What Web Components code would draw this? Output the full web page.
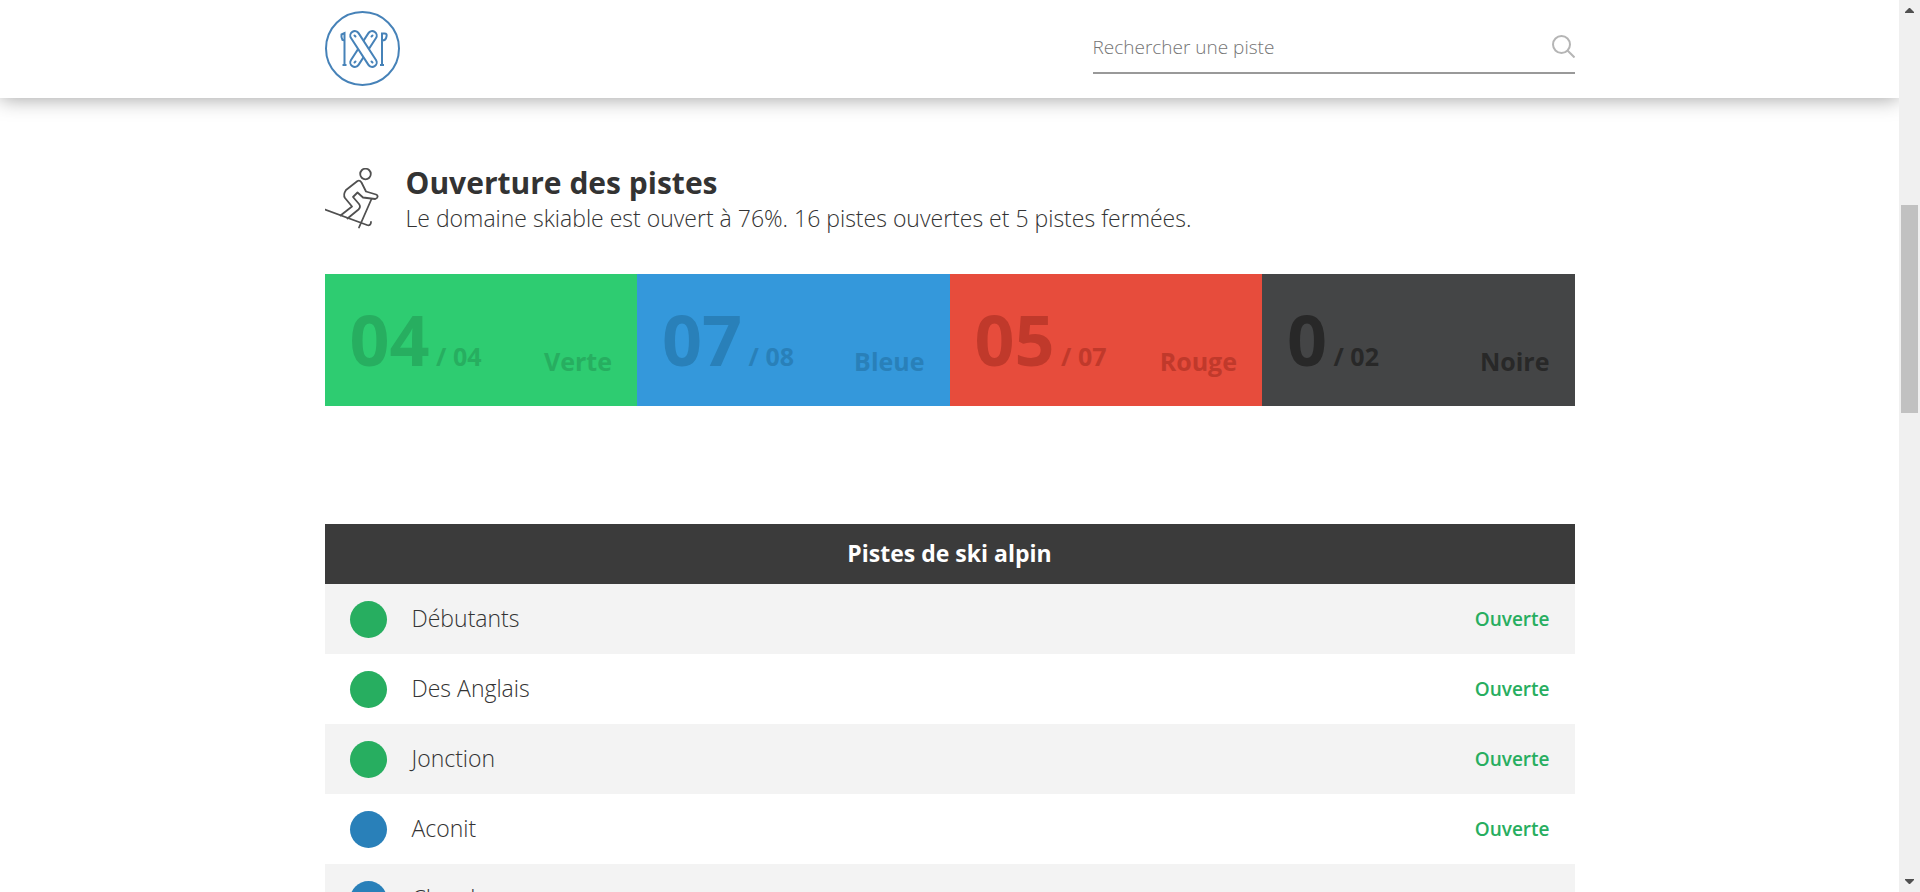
<!DOCTYPE html>
<html lang="fr">
<head>
<meta charset="utf-8">
<title>Ouverture des pistes</title>
<style>
  html, body { margin: 0; height: 100%; overflow: hidden; background: #fff; }
  body { font-family: "Open Sans", "Noto Sans", sans-serif; color: #333; }
</style>
</head>
<body>
<ski-page>
  <site-header slot="header"></site-header>
  <section-title heading="Ouverture des pistes">Le domaine skiable est ouvert à 76%. 16 pistes ouvertes et 5 pistes fermées.</section-title>
  <piste-summary>
    <summary-card color="verte" open="04" total="04">Verte</summary-card>
    <summary-card color="bleue" open="07" total="08">Bleue</summary-card>
    <summary-card color="rouge" open="05" total="07">Rouge</summary-card>
    <summary-card color="noire" open="0" total="02">Noire</summary-card>
  </piste-summary>
  <piste-table heading="Pistes de ski alpin"></piste-table>
</ski-page>

<script>
const define = (name, html, setup) => {
  const template = document.createElement('template');
  template.innerHTML = html;
  customElements.define(name, class extends HTMLElement {
    constructor() {
      super();
      this.attachShadow({ mode: 'open' }).append(template.content.cloneNode(true));
    }
    connectedCallback() { if (setup) setup(this, this.shadowRoot); }
  });
};

define('ski-page', `
  <style>
    :host { display: grid; grid-template-columns: minmax(0, 1fr) 21px; height: 100vh; }
    .view { overflow: hidden; }
    main { box-sizing: border-box; max-width: 1250px; margin: 0 auto; padding-top: 67px; }
  </style>
  <div class="view">
    <slot name="header"></slot>
    <main><slot></slot></main>
  </div>
  <scroll-rail></scroll-rail>`);

define('scroll-rail', `
  <style>
    :host { display: grid; grid-template-rows: 21px 184fr 208fr 458fr 21px; justify-items: center; background: #f0f0f0; }
    svg { display: block; width: 9px; height: 5px; place-self: center; }
    .thumb { grid-row: 3; width: 17px; background: #c1c1c1; }
    .down { grid-row: 5; }
  </style>
  <svg viewBox="0 0 9 5" fill="#505050"><path d="M0 5V4L4 0h1l4 4v1z"/></svg>
  <div class="thumb"></div>
  <svg class="down" viewBox="0 0 9 5" fill="#505050"><path d="M0 0v1l4 4h1l4-4V0z"/></svg>`);

define('site-header', `
  <style>
    :host { display: block; background: #fff; box-shadow: 0 0 20px rgba(0, 0, 0, .4); }
    .bar { box-sizing: border-box; max-width: 1250px; height: 98px; padding-bottom: 2px; margin: 0 auto; display: flex; justify-content: space-between; align-items: center; }
    a, svg { display: block; }
    form { display: flex; align-items: center; width: 482px; height: 52px; border-bottom: 2px solid #999; box-sizing: border-box; }
    input { flex: 1; min-width: 0; border: 0; padding: 0; outline: 0; background: none; font: 300 19px/28px "Open Sans", sans-serif; color: #333; }
    input::placeholder { color: #757575; opacity: 1; }
    button { border: 0; padding: 0 0 2px; background: none; }
  </style>
  <header class="bar">
    <a href="#" aria-label="Accueil">
      <svg width="75" height="75" viewBox="0 0 75 75" fill="none" stroke="#4682b8" stroke-width="2">
        <circle cx="37.500" cy="37.500" r="36.500"/>
        <rect x="-4.500" y="-20.500" width="9" height="41" rx="4.500" transform="translate(38.500 38) rotate(33)"/>
        <rect x="-4.500" y="-20.500" width="9" height="41" rx="4.500" fill="#fff" transform="translate(38.500 38) rotate(-33)"/>
        <path d="M29.500 24.500l1 1M46.500 50.500l1 1M46.500 25.500l1-1M29.500 51.500l1-1" stroke-linecap="round"/>
        <path d="M19.500 30v25M17.500 54h4M16.500 23.500l3-1.500v7.500l-2-.5c-1-2-1.500-3.500-1-5.500z"/>
        <path d="M57 22v33M55 54h4M57 22.500h2.500c2 0 2.500 1 2 3-.5 3-1.500 4-4.500 4z"/>
      </svg>
    </a>
    <form role="search">
      <input type="search" aria-label="Rechercher une piste" placeholder="Rechercher une piste">
      <button type="button" aria-label="Rechercher">
        <svg width="23" height="23" viewBox="0 0 23 23" fill="none" stroke="#b5b5b5" stroke-width="2"><circle cx="9.500" cy="9.500" r="8.500"/><path d="M15.500 15.500l7 7"/></svg>
      </button>
    </form>
  </header>`);

define('section-title', `
  <style>
    :host { display: flex; align-items: flex-start; gap: 27px; }
    svg { display: block; flex: none; margin-top: 3px; }
    h1 { margin: 0; font-size: 30px; line-height: 36px; font-weight: 700; }
    p { margin: 0; font-size: 23px; line-height: 34px; font-weight: 300; }
  </style>
  <svg width="54" height="62" viewBox="0 0 54 62" fill="none" stroke="#505050" stroke-width="1.800" stroke-linejoin="round" stroke-linecap="round">
    <circle cx="40.500" cy="6" r="5.300"/>
    <path d="M15.500 47.500l11.500-9-7-8.500c-2-3-1-5 1-8l11.500-9c2-1 3 0 4 1.500l4.500 9 10 3c2.500 1 2 4-1 4.500l-12-1.500-5.500-5-4.500 4.500 6 7c1.500 2 1 4-.5 5.500l-11 9"/>
    <path d="M0 41.500l42 15.500c2.500 1 4-.5 4-3M46.500 31L34 59.500"/>
  </svg>
  <div><h1></h1><p><slot></slot></p></div>`,
  (host, root) => { root.querySelector('h1').textContent = host.getAttribute('heading'); });

define('piste-summary', `
  <style>
    :host { display: grid; grid-template-columns: repeat(4, 1fr); margin-top: 39px; }
  </style>
  <slot></slot>`);

define('summary-card', `
  <style>
    :host { display: flex; justify-content: space-between; align-items: flex-end; box-sizing: border-box; height: 132px; padding: 0 25px 27px; font-weight: 700; font-size: 25px; line-height: 36px; }
    :host([color=verte]) { background: #2ecc71; color: #27ae60; }
    :host([color=bleue]) { background: #3498db; color: #2980b9; }
    :host([color=rouge]) { background: #e74c3c; color: #c0392b; }
    :host([color=noire]) { background: #444546; color: #282828; }
    .count { line-height: 46px; }
    .open { font-size: 70px; line-height: 0; }
  </style>
  <div class="count"><span class="open"></span> / <span class="total"></span></div>
  <div><slot></slot></div>`,
  (host, root) => {
    root.querySelector('.open').textContent = host.getAttribute('open');
    root.querySelector('.total').textContent = host.getAttribute('total');
  });

define('piste-table', `
  <style>
    :host { display: block; margin-top: 118px; }
    table { width: 100%; border-collapse: collapse; font-size: 23px; }
    th, td { padding: 0 25px; }
    thead th { height: 58px; padding-bottom: 2px; background: #3b3b3b; color: #fff; font-weight: 700; }
    tbody tr { height: 70px; }
    tbody tr:nth-child(odd) { background: #f3f3f3; }
    tbody th { text-align: left; font-weight: 300; }
    .name { display: flex; align-items: center; gap: 25px; }
    .label { padding-bottom: 2px; }
    .dot { width: 37px; height: 37px; border-radius: 50%; background: #27ae60; }
    .dot.bleue { background: #2980b9; }
    td { text-align: right; font-size: 19px; font-weight: 600; color: #27ae60; }
  </style>
  <table>
    <thead><tr><th colspan="2" scope="colgroup"></th></tr></thead>
    <tbody></tbody>
  </table>`,
  (host, root) => {
    root.querySelector('thead th').textContent = host.getAttribute('heading');
    const pistes = [['Débutants', 'verte'], ['Des Anglais', 'verte'], ['Jonction', 'verte'], ['Aconit', 'bleue'], ['Chordes', 'bleue']];
    root.querySelector('tbody').innerHTML = pistes.map(([name, color]) =>
      `<tr><th scope="row"><div class="name"><span class="dot ${color}"></span><span class="label">${name}</span></div></th><td>Ouverte</td></tr>`).join('');
  });
</script>
</body>
</html>
